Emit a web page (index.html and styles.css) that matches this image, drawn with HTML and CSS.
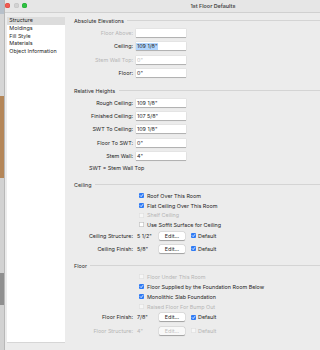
FILE: index.html
```html
<!DOCTYPE html>
<html lang="en">
<head>
<meta charset="utf-8">
<title>1st Floor Defaults</title>
<link rel="stylesheet" href="styles.css">
</head>
<body>
<div class="screen">
  <div class="edge"></div>
  <div class="window">
    <div class="titlebar">
      <div class="lights"><span class="light red"></span><span class="light gray"></span><span class="light green"></span></div>
      <div class="title">1st Floor Defaults</div>
    </div>
    <div class="body">
      <ul class="sidebar">
        <li class="selected">Structure</li>
        <li>Moldings</li>
        <li>Fill Style</li>
        <li>Materials</li>
        <li>Object Information</li>
      </ul>
      <div class="panel">
        <section class="sec sec-abs">
          <div class="group-title"><span>Absolute Elevations</span></div>
          <div class="fields fields-abs">
            <div class="field"><span class="label disabled">Floor Above:</span><div class="input"></div></div>
            <div class="field"><span class="label">Ceiling:</span><div class="input focus"><span class="sel">109 1/8"</span></div></div>
            <div class="field"><span class="label disabled">Stem Wall Top:</span><div class="input disabled">0"</div></div>
            <div class="field"><span class="label">Floor:</span><div class="input">0"</div></div>
          </div>
        </section>

        <section class="sec sec-rel">
          <div class="group-title"><span>Relative Heights</span></div>
          <div class="fields fields-rel">
            <div class="field"><span class="label">Rough Ceiling:</span><div class="input">109 1/8"</div></div>
            <div class="field"><span class="label">Finished Ceiling:</span><div class="input">107 5/8"</div></div>
            <div class="field"><span class="label">SWT To Ceiling:</span><div class="input">109 1/8"</div></div>
            <div class="field"><span class="label">Floor To SWT:</span><div class="input">0"</div></div>
            <div class="field"><span class="label">Stem Wall:</span><div class="input">4"</div></div>
          </div>
          <p class="note">SWT = Stem Wall Top</p>
        </section>

        <section class="sec sec-ceil">
          <div class="group-title"><span>Ceiling</span></div>
          <div class="checks checks-ceil">
            <div class="check"><span class="cb on"><svg viewBox="0 0 10 10"><path d="M2.4 5.3 L4.3 7.2 L7.7 2.9"/></svg></span><span>Roof Over This Room</span></div>
            <div class="check"><span class="cb on"><svg viewBox="0 0 10 10"><path d="M2.4 5.3 L4.3 7.2 L7.7 2.9"/></svg></span><span>Flat Ceiling Over This Room</span></div>
            <div class="check disabled"><span class="cb"></span><span>Shelf Ceiling</span></div>
            <div class="check"><span class="cb"></span><span>Use Soffit Surface for Ceiling</span></div>
          </div>
          <div class="opts opts-ceil">
            <div class="opt"><span class="label">Ceiling Structure:</span><span class="value">5 1/2"</span><button class="btn">Edit...</button><span class="cb on"><svg viewBox="0 0 10 10"><path d="M2.4 5.3 L4.3 7.2 L7.7 2.9"/></svg></span><span class="def">Default</span></div>
            <div class="opt"><span class="label">Ceiling Finish:</span><span class="value">5/8"</span><button class="btn">Edit...</button><span class="cb on"><svg viewBox="0 0 10 10"><path d="M2.4 5.3 L4.3 7.2 L7.7 2.9"/></svg></span><span class="def">Default</span></div>
          </div>
        </section>

        <section class="sec sec-floor">
          <div class="group-title"><span>Floor</span></div>
          <div class="checks checks-floor">
            <div class="check disabled"><span class="cb"></span><span>Floor Under This Room</span></div>
            <div class="check"><span class="cb on"><svg viewBox="0 0 10 10"><path d="M2.4 5.3 L4.3 7.2 L7.7 2.9"/></svg></span><span>Floor Supplied by the Foundation Room Below</span></div>
            <div class="check"><span class="cb on"><svg viewBox="0 0 10 10"><path d="M2.4 5.3 L4.3 7.2 L7.7 2.9"/></svg></span><span>Monolithic Slab Foundation</span></div>
            <div class="check disabled"><span class="cb"></span><span>Raised Floor For Bump Out</span></div>
          </div>
          <div class="opts opts-floor">
            <div class="opt"><span class="label">Floor Finish:</span><span class="value">7/8"</span><button class="btn">Edit...</button><span class="cb on"><svg viewBox="0 0 10 10"><path d="M2.4 5.3 L4.3 7.2 L7.7 2.9"/></svg></span><span class="def">Default</span></div>
            <div class="opt disabled"><span class="label">Floor Structure:</span><span class="value">4"</span><button class="btn" disabled>Edit...</button><span class="cb"></span><span class="def">Default</span></div>
          </div>
        </section>
      </div>
    </div>
  </div>
</div>
</body>
</html>
```

FILE: styles.css
```css
* {
  box-sizing: border-box;
  margin: 0;
  padding: 0;
}

html,
body {
  width: 320px;
  height: 350px;
  overflow: hidden;
}

body {
  font-family: Inter, "Noto Sans", sans-serif;
  font-size: 5.4px;
  color: #262626;
  background: #ececec;
}

.screen {
  display: flex;
  width: 320px;
  height: 350px;
}

.edge {
  flex: none;
  width: 5px;
  height: 350px;
  border-right: 1px solid #b8b8b8;
  background: linear-gradient(to bottom,
    #b7c0ca 0 14px,
    #d6d6d6 14px 96px,
    #b48658 96px 178px,
    #d2d2d2 178px 273px,
    #8f8f8f 273px 305px,
    #d2d2d2 305px);
}

.window {
  flex: 1;
  display: flex;
  flex-direction: column;
  min-width: 0;
}

.titlebar {
  flex: none;
  height: 13px;
  display: flex;
  align-items: center;
  background: #e6e6e6;
  border-bottom: 1px solid #d0d0d0;
  padding-bottom: 1px;
}

.lights {
  display: flex;
  gap: 3.4px;
  margin-left: 0.2px;
}

.light {
  width: 5px;
  height: 5px;
  border-radius: 50%;
}

.red { background: #f05a52; box-shadow: inset 0 0 0 0.4px #d8463f; }
.gray { background: #d2d2d2; box-shadow: inset 0 0 0 0.4px #c2c2c2; }
.green { background: #2dc241; box-shadow: inset 0 0 0 0.4px #22a833; }

.title {
  width: 100px;
  margin-left: 136px;
  text-align: center;
  font-weight: 600;
  color: #4b4b4b;
  white-space: nowrap;
}

.body {
  flex: 1;
  display: flex;
  min-height: 0;
}

.sidebar {
  flex: none;
  list-style: none;
  width: 58px;
  height: 326px;
  margin: 4px 0 0 2px;
  background: #fff;
  border-bottom: 0.5px solid #d6d6d6;
}

.sidebar li {
  height: 7.75px;
  line-height: 7.75px;
  padding-left: 2.3px;
  white-space: nowrap;
}

.sidebar li.selected {
  background: #dcdcdc;
}

.panel {
  flex: 1;
  padding: 4px 0 0 9px;
  min-width: 0;
}

.group-title {
  display: flex;
  align-items: center;
  height: 8px;
  line-height: 8px;
  color: #2e2e2e;
  white-space: nowrap;
}

.group-title::after {
  content: "";
  flex: 1;
  height: 1px;
  margin: -1px 0 0 3.5px;
  background: #d4d4d4;
}

.fields {
  display: flex;
  flex-direction: column;
  margin-top: 4px;
}

.fields-abs { gap: 5.33px; }
.fields-rel { gap: 5.25px; }

.field,
.opt {
  display: flex;
  align-items: center;
  height: 8px;
  white-space: nowrap;
}

.label {
  width: 59px;
  margin-right: 3px;
  text-align: right;
}

.disabled,
.disabled .label,
.disabled .value,
.disabled .def {
  color: #b6b6b6;
}

.input {
  width: 50px;
  height: 8px;
  line-height: 8px;
  padding-left: 1px;
  background: #fff;
  box-shadow: 0 0.5px 0.6px rgba(0, 0, 0, 0.22), 0 0 0 0.4px rgba(0, 0, 0, 0.08);
}

.input.disabled {
  color: #bdbdbd;
}

.input.focus {
  padding-left: 0;
}

.sel {
  display: inline-block;
  height: 7px;
  margin-top: 0.5px;
  line-height: 7px;
  padding: 0 1px;
  background: #b3d6fe;
}

.sec-rel { margin-top: 10px; }
.sec-ceil { margin-top: 8.5px; }
.sec-floor { margin-top: 9px; }

.note {
  height: 8px;
  line-height: 8px;
  margin: 4.5px 0 0 15px;
  white-space: nowrap;
}

.checks {
  display: flex;
  flex-direction: column;
  margin-top: 3px;
}

.checks-ceil { gap: 1.67px; }
.checks-floor { gap: 2px; }

.check {
  display: flex;
  align-items: center;
  height: 8px;
  padding-left: 65.3px;
  white-space: nowrap;
}

.check .cb {
  margin-right: 2.7px;
}

.cb {
  flex: none;
  display: inline-flex;
  width: 5px;
  height: 5px;
  border-radius: 1px;
  background: #fff;
  box-shadow: inset 0 0 0 0.5px #a9a9a9;
}

.disabled .cb {
  background: #f6f6f6;
  box-shadow: inset 0 0 0 0.5px #d6d6d6;
}

.cb.on {
  background: #2f7bf5;
  box-shadow: none;
}

.cb svg {
  width: 5px;
  height: 5px;
}

.cb path {
  fill: none;
  stroke: #fff;
  stroke-width: 1.6;
  stroke-linecap: round;
  stroke-linejoin: round;
}

.opts {
  display: flex;
  flex-direction: column;
}

.opts-ceil { margin-top: 3px; gap: 5px; }
.opts-floor { margin-top: 2.5px; gap: 5.5px; }

.value {
  width: 23px;
  padding-left: 1px;
}

.btn {
  appearance: none;
  border: none;
  font: inherit;
  color: #262626;
  width: 26px;
  height: 8px;
  line-height: 8px;
  text-align: center;
  background: #fff;
  border-radius: 1.5px;
  box-shadow: 0 0.5px 0.8px rgba(0, 0, 0, 0.28), 0 0 0 0.4px rgba(0, 0, 0, 0.1);
}

.btn:disabled {
  color: #bdbdbd;
  background: #f8f8f8;
}

.opt .cb {
  margin-left: 6px;
}

.def {
  margin-left: 2px;
}
```
